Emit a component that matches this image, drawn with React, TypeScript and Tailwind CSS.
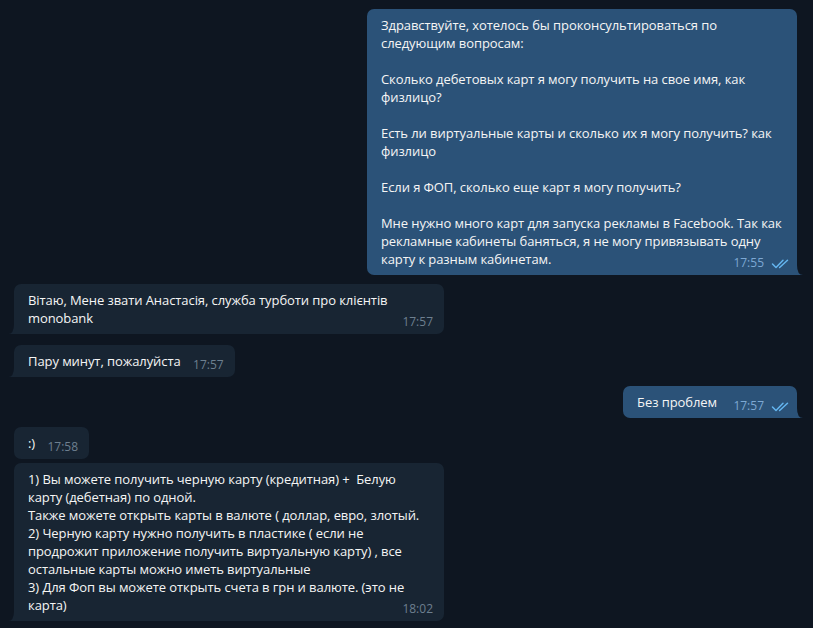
type Msg = {
  out: boolean;
  text: string;
  time: string;
  tail?: boolean;
  mt: string;
};

const messages: Msg[] = [
  {
    out: true,
    mt: "mt-0",
    tail: true,
    time: "17:55",
    text:
      "Здравствуйте, хотелось бы проконсультироваться по следующим вопросам:\n\nСколько дебетовых карт я могу получить на свое имя, как физлицо?\n\nЕсть ли виртуальные карты и сколько их я могу получить? как физлицо\n\nЕсли я ФОП, сколько еще карт я могу получить?\n\nМне нужно много карт для запуска рекламы в Facebook. Так как рекламные кабинеты баняться, я не могу привязывать одну карту к разным кабинетам.",
  },
  {
    out: false,
    mt: "mt-[9px]",
    tail: true,
    time: "17:57",
    text: "Вітаю, Мене звати Анастасія, служба турботи про клієнтів monobank",
  },
  {
    out: false,
    mt: "mt-[11px]",
    tail: true,
    time: "17:57",
    text: "Пару минут, пожалуйста",
  },
  { out: true, mt: "mt-[9px]", tail: true, time: "17:57", text: "Без проблем" },
  { out: false, mt: "mt-[9px]", time: "17:58", text: ":)" },
  {
    out: false,
    mt: "mt-[4px]",
    tail: true,
    time: "18:02",
    text:
      "1) Вы можете получить черную карту (кредитная) +  Белую карту (дебетная) по одной.\nТакже можете открыть карты в валюте ( доллар, евро, злотый.\n2) Черную карту нужно получить в пластике ( если не продрожит приложение получить виртуальную карту) , все остальные карты можно иметь виртуальные\n3) Для Фоп вы можете открыть счета в грн и валюте. (это не карта)",
  },
];

function Checks() {
  return (
    <svg width="19" height="10" viewBox="0 0 19 10" fill="none">
      <path d="M1.5 5 L5 8.5 L12 1.2" stroke="#64b5ef" strokeWidth="1.5" strokeLinecap="round" strokeLinejoin="round" />
      <path d="M8.6 8.5 L16.5 1.2" stroke="#64b5ef" strokeWidth="1.5" strokeLinecap="round" />
    </svg>
  );
}

function Bubble({ m }: { m: Msg }) {
  const bg = m.out ? "#2b5278" : "#182533";
  return (
    <div className={`flex ${m.out ? "justify-end" : "justify-start"} ${m.mt}`}>
      <div
        className={`relative max-w-[430px] py-[7px] pl-[14px] pr-[12px] text-[13px] leading-[18px] tracking-[-0.08px] text-[#f5f5f5] whitespace-pre-wrap ${
          m.out ? "bg-[#2b5278]" : "bg-[#182533]"
        } ${
          m.tail
            ? m.out
              ? "rounded-[7px] rounded-br-none"
              : "rounded-[7px] rounded-bl-none"
            : "rounded-[7px]"
        }`}
      >
        {m.text}
        <span className={`inline-block h-px ${m.out ? "w-[68px]" : "w-[42px]"}`} />
        <div
          className={`absolute bottom-[5px] flex items-center gap-[7px] text-[12px] leading-[14px] tracking-normal ${
            m.out ? "right-[7px] text-[#7da8d3]" : "right-[11px] text-[#6d7f8f]"
          }`}
        >
          <span>{m.time}</span>
          {m.out && (
            <span className="mb-[-1px]">
              <Checks />
            </span>
          )}
        </div>
        {m.tail && (
          <svg
            width="6"
            height="10"
            viewBox="0 0 6 10"
            className={`absolute bottom-0 ${m.out ? "right-[-6px]" : "left-[-6px] -scale-x-100"}`}
          >
            <path d="M0 0 Q0 10 6 10 L0 10 Z" fill={bg} />
          </svg>
        )}
      </div>
    </div>
  );
}

export default function App() {
  return (
    <div
      className="w-[813px] h-[628px] overflow-hidden bg-[#0e1621] pt-[9px] pl-[14px] pr-[16px]"
      style={{ fontFamily: '"Open Sans", "Noto Sans", sans-serif' }}
    >
      {messages.map((m, i) => (
        <Bubble key={i} m={m} />
      ))}
    </div>
  );
}
